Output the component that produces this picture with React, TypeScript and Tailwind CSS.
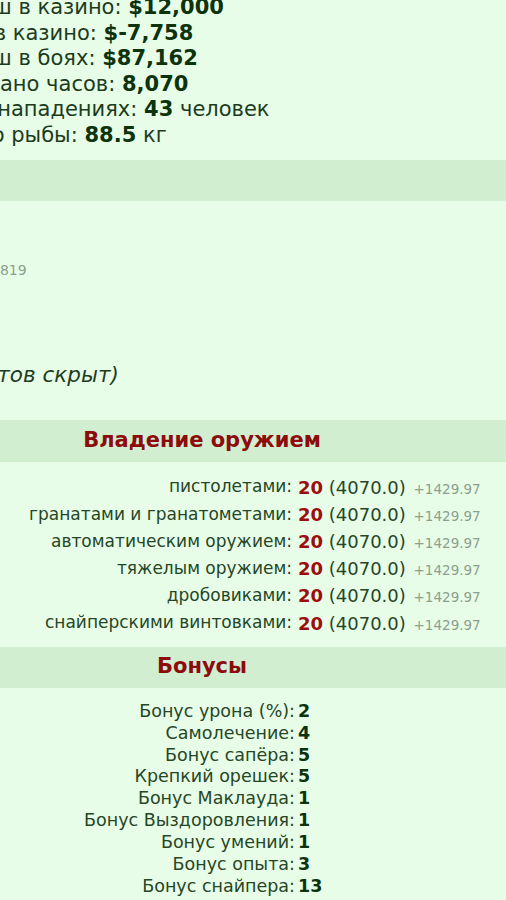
const stats = [
  { label: "Выигрыш в казино:", value: "$12,000" },
  { label: "Убыток в казино:", value: "$-7,758" },
  { label: "Выигрыш в боях:", value: "$87,162" },
  { label: "Отработано часов:", value: "8,070" },
  { label: "Убито в нападениях:", value: "43", unit: "человек" },
  { label: "Поймано рыбы:", value: "88.5", unit: "кг" },
]

const weapons = [
  "пистолетами",
  "гранатами и гранатометами",
  "автоматическим оружием",
  "тяжелым оружием",
  "дробовиками",
  "снайперскими винтовками",
]

const bonuses = [
  { name: "Бонус урона (%)", value: 2 },
  { name: "Самолечение", value: 4 },
  { name: "Бонус сапёра", value: 5 },
  { name: "Крепкий орешек", value: 5 },
  { name: "Бонус Маклауда", value: 1 },
  { name: "Бонус Выздоровления", value: 1 },
  { name: "Бонус умений", value: 1 },
  { name: "Бонус опыта", value: 3 },
  { name: "Бонус снайпера", value: 13 },
]

function SectionHeader({ title, className = "" }: { title?: string; className?: string }) {
  return (
    <div
      className={`flex h-[41px] items-center justify-center bg-[#d1eed1] text-[21px] font-bold text-[#8c0c0c] ${className}`}
    >
      {title}
    </div>
  )
}

export default function App() {
  return (
    <div className="h-[900px] w-[506px] overflow-hidden bg-[#e7fde7] font-['DejaVu_Sans',Verdana,sans-serif] text-[#264626]">
      <div className="-ml-[102px] w-[608px]">
        <div className="-mt-[5px] pl-[9px] text-[21px] leading-[25.6px] text-[#1c3b1c]">
          {stats.map((s) => (
            <div key={s.label} className="whitespace-nowrap">
              {s.label} <b className="text-[#0d330d]">{s.value}</b>
              {s.unit && <> {s.unit}</>}
            </div>
          ))}
        </div>

        <SectionHeader className="mt-[11px]" />

        <div className="h-[219px] pt-[59px]">
          <div className="pl-[93px] text-[14px] leading-[20px] text-[#8d9f8d]">2819</div>
          <div className="mt-[82px] -ml-[79px] whitespace-nowrap text-[21.5px] italic leading-[26px] text-[#1f3d1f]">
            (список предметов скрыт)
          </div>
        </div>

        <SectionHeader title="Владение оружием" className="h-[42px]" />

        <div className="pt-[12px] pb-[10px]">
          {weapons.map((w) => (
            <div key={w} className="grid h-[27.2px] grid-cols-[394px_1fr] items-center whitespace-nowrap">
              <span className="text-right text-[17px]">{w}:</span>
              <span className="pl-[6px] text-[18px]">
                <b className="text-[#9a0e0e]">20</b> (4070.0){" "}
                <span className="ml-[2px] text-[13.5px] leading-none text-[#8d9f8d]">+1429.97</span>
              </span>
            </div>
          ))}
        </div>

        <SectionHeader title="Бонусы" />

        <div className="pt-[13px] text-[17.5px] leading-[21.9px]">
          {bonuses.map((b) => (
            <div key={b.name} className="grid grid-cols-[397px_1fr] whitespace-nowrap">
              <span className="text-right">{b.name}:</span>
              <b className="pl-[3px] text-[#0d330d]">{b.value}</b>
            </div>
          ))}
        </div>
      </div>
    </div>
  )
}
